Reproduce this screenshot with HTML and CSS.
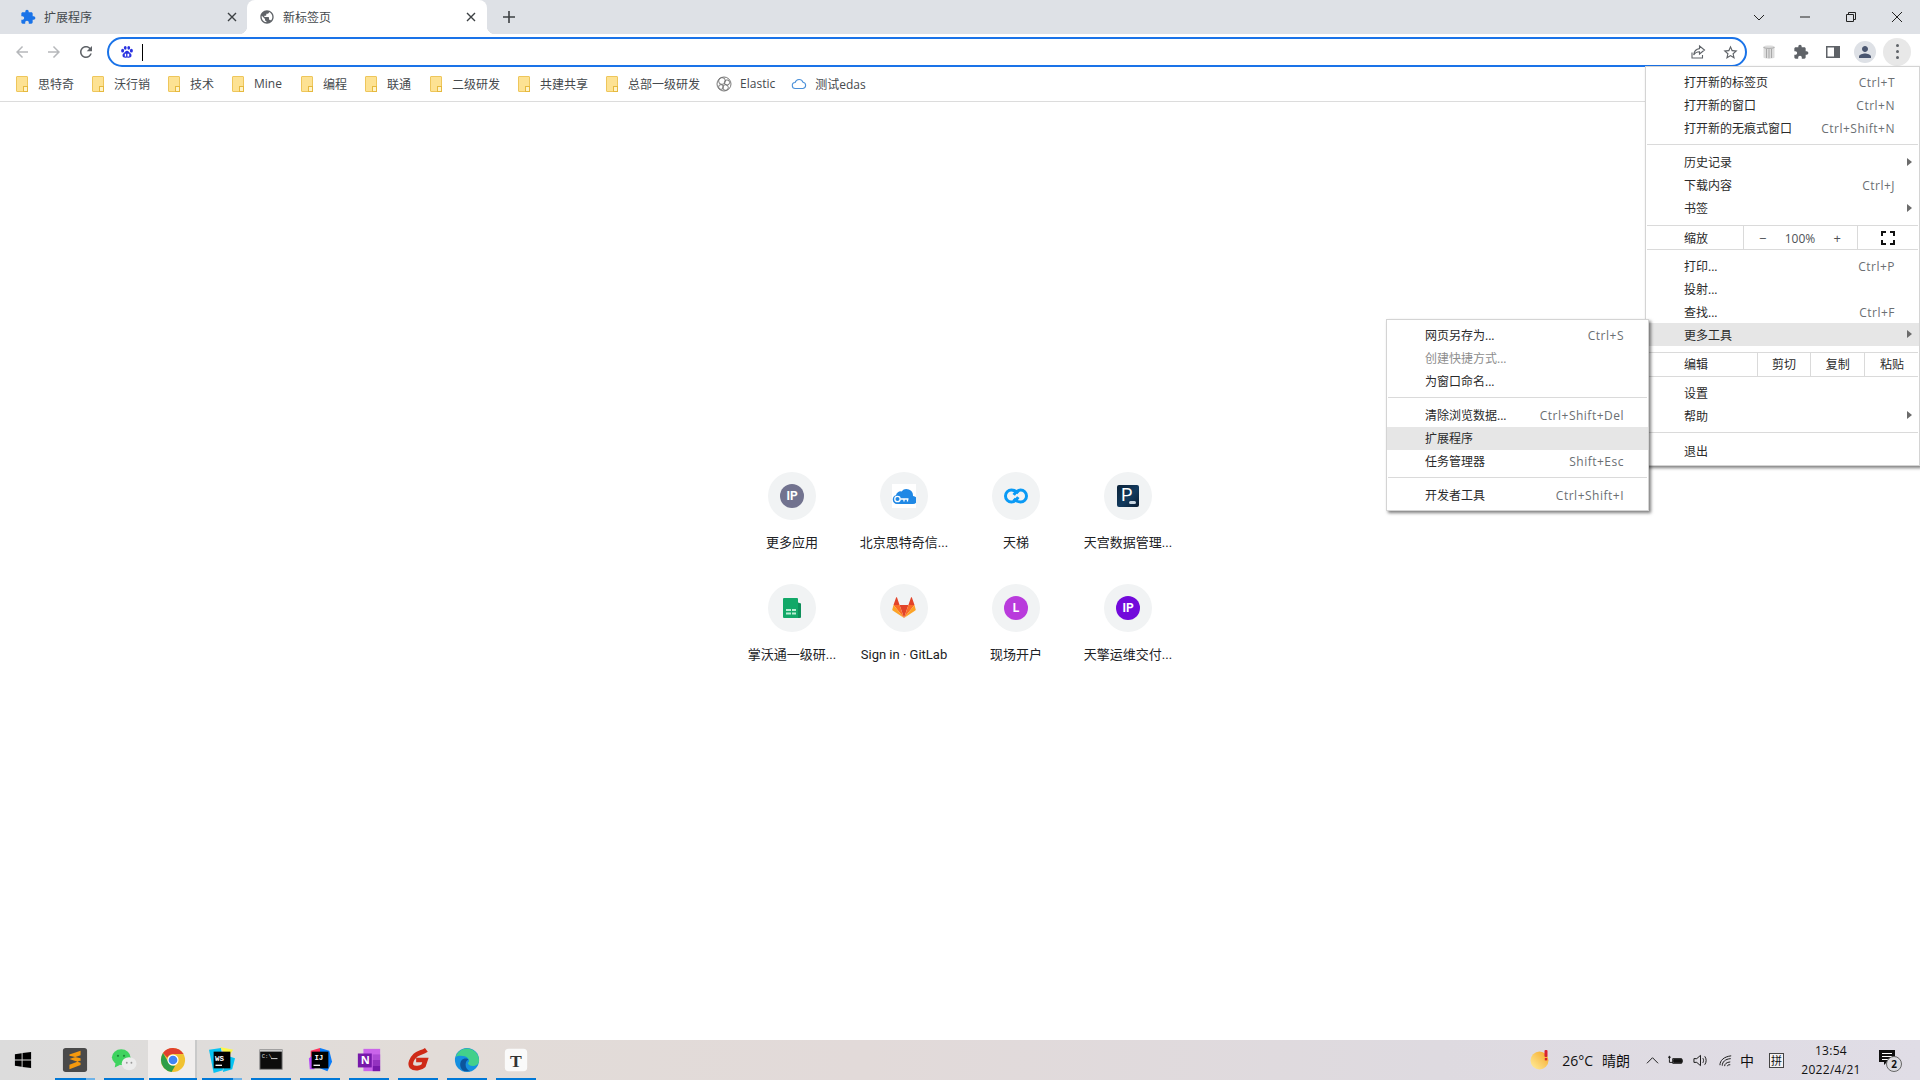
FILE: index.html
```html
<!DOCTYPE html>
<html lang="zh-CN">
<head>
    <meta charset="UTF-8">
    <title>新标签页</title>
    <link rel="stylesheet" href="styles.css">
</head>
<body>
    <div class="tabstrip">
        <div class="tab">
            <svg class="favicon" viewBox="0 0 24 24"><path fill="#1a73e8" d="M20.5 11H19V7c0-1.1-.9-2-2-2h-4V3.5C13 2.12 11.88 1 10.5 1S8 2.12 8 3.5V5H4c-1.1 0-1.99.9-1.99 2v3.8H3.5c1.49 0 2.7 1.21 2.7 2.7s-1.21 2.7-2.7 2.7H2V20c0 1.1.9 2 2 2h3.8v-1.5c0-1.49 1.21-2.7 2.7-2.7 1.49 0 2.7 1.21 2.7 2.7V22H17c1.1 0 2-.9 2-2v-4h1.5c1.38 0 2.5-1.12 2.5-2.5S21.88 11 20.5 11z"/></svg>
            <span class="tab-title">扩展程序</span>
            <svg class="tab-close" viewBox="0 0 10 10"><path d="M1 1l8 8M9 1l-8 8"/></svg>
        </div>
        <div class="tab tab-active">
            <svg class="favicon" viewBox="0 0 24 24"><path fill="#5f6368" d="M12 2C6.48 2 2 6.48 2 12s4.48 10 10 10 10-4.48 10-10S17.52 2 12 2zm-1 17.93c-3.95-.49-7-3.85-7-7.93 0-.62.08-1.21.21-1.79L9 15v1c0 1.1.9 2 2 2v1.93zm6.9-2.54c-.26-.81-1-1.39-1.9-1.39h-1v-3c0-.55-.45-1-1-1H8v-2h2c.55 0 1-.45 1-1V7h2c1.1 0 2-.9 2-2v-.41c2.93 1.19 5 4.06 5 7.41 0 2.08-.8 3.97-2.1 5.39z"/></svg>
            <span class="tab-title">新标签页</span>
            <svg class="tab-close" viewBox="0 0 10 10"><path d="M1 1l8 8M9 1l-8 8"/></svg>
        </div>
        <svg class="new-tab" viewBox="0 0 12 12"><path d="M6 0v12M0 6h12"/></svg>
        <div class="window-controls">
            <svg class="win-btn" viewBox="0 0 12 12"><path d="M1 4l5 5 5-5"/></svg>
            <svg class="win-btn" viewBox="0 0 12 12"><path d="M1 6h10"/></svg>
            <svg class="win-btn" viewBox="0 0 12 12"><path d="M1.5 3.5h7v7h-7zM3.5 3.500v-2h7v7h-2"/></svg>
            <svg class="win-btn" viewBox="0 0 12 12"><path d="M1 1l10 10M11 1L1 11"/></svg>
        </div>
    </div>

    <div class="toolbar">
        <svg class="nav-icon nav-off" viewBox="0 0 24 24"><path d="M20 11H7.83l5.59-5.59L12 4l-8 8 8 8 1.41-1.41L7.83 13H20v-2z"/></svg>
        <svg class="nav-icon nav-off" viewBox="0 0 24 24"><path d="M12 4l-1.41 1.41L16.17 11H4v2h12.17l-5.58 5.59L12 20l8-8z"/></svg>
        <svg class="nav-icon" viewBox="0 0 24 24"><path d="M17.65 6.35C16.2 4.9 14.21 4 12 4c-4.42 0-7.99 3.58-7.99 8s3.57 8 7.99 8c3.73 0 6.84-2.55 7.73-6h-2.08c-.82 2.33-3.04 4-5.65 4-3.31 0-6-2.69-6-6s2.69-6 6-6c1.66 0 3.14.69 4.22 1.78L13 11h7V4l-2.35 2.35z"/></svg>
        <div class="omnibox">
            <svg class="baidu" viewBox="0 0 16 16" fill="#2932e1">
                <ellipse cx="3" cy="6.500" rx="1.700" ry="2.100"/>
                <ellipse cx="6" cy="3.200" rx="1.600" ry="2.200"/>
                <ellipse cx="10" cy="3.200" rx="1.600" ry="2.200"/>
                <ellipse cx="13" cy="6.500" rx="1.700" ry="2.100"/>
                <path d="M8 6.500c-2 0-2.400 2-3.800 3C3 10.400 2.600 11.500 3 12.800 3.500 14.500 5.500 14.700 8 14.200c2.500.5 4.500.3 5-1.400.4-1.300 0-2.400-1.200-3.300-1.400-1-1.800-3-3.800-3z"/>
                <path fill="#fff" d="M5.500 10h1.500v3H5.500zM8.500 10h2v3h-2z"/>
            </svg>
            <span class="caret"></span>
            <svg class="omni-icon" viewBox="0 0 16 16"><path fill="none" stroke="#5f6368" stroke-width="1.100" d="M2 8.500v5.500h10.500v-3M9.500 2l5 4-5 4V7.700C7 7.700 5 8.600 3.700 11 4 8 6 5 9.500 4.600z"/></svg>
            <svg class="omni-icon omni-star" viewBox="0 0 24 24"><path fill="#5f6368" d="M22 9.240l-7.190-.62L12 2 9.190 8.630 2 9.240l5.460 4.730L5.820 21 12 17.270 18.180 21l-1.630-7.030L22 9.240zM12 15.400l-3.760 2.270 1-4.280-3.320-2.880 4.380-.38L12 6.100l1.710 4.040 4.380.38-3.320 2.880 1 4.280L12 15.400z"/></svg>
        </div>
        <div class="ext-icons">
            <svg class="ext-icon" viewBox="0 0 16 16"><path fill="#dcdcdc" d="M2.500 2.500c0-1.500 11-1.500 11 0v11c0 1.500-11 1.500-11 0z"/><path fill="none" stroke="#a9a9a9" d="M2.500 3.500c2 1.200 9 1.200 11 0M5.500 5v9M8 5.200v9M10.500 5v9"/></svg>
            <svg class="ext-icon" viewBox="0 0 24 24"><path fill="#5f6368" d="M20.500 11H19V7c0-1.100-.9-2-2-2h-4V3.500C13 2.120 11.880 1 10.500 1S8 2.120 8 3.500V5H4c-1.100 0-1.990.9-1.990 2v3.800H3.500c1.490 0 2.700 1.210 2.700 2.700s-1.210 2.700-2.700 2.700H2V20c0 1.100.9 2 2 2h3.800v-1.500c0-1.490 1.210-2.700 2.700-2.700 1.490 0 2.700 1.210 2.700 2.700V22H17c1.100 0 2-.9 2-2v-4h1.500c1.380 0 2.500-1.120 2.500-2.500S21.880 11 20.500 11z"/></svg>
            <svg class="ext-icon" viewBox="0 0 16 16"><path fill="#5f6368" fill-rule="evenodd" d="M1 2h14v12H1zM2.500 3.500v9H9v-9z"/></svg>
            <span class="avatar"><svg viewBox="0 0 24 24"><path fill="#4a5670" d="M12 12c2.210 0 4-1.790 4-4s-1.790-4-4-4-4 1.790-4 4 1.790 4 4 4zm0 2c-2.670 0-8 1.340-8 4v2h16v-2c0-2.660-5.330-4-8-4z"/></svg></span>
            <span class="kebab"><i></i><i></i><i></i></span>
        </div>
    </div>

    <div class="bookmarks">
        <a class="bookmark"><span class="folder"></span>思特奇</a>
        <a class="bookmark"><span class="folder"></span>沃行销</a>
        <a class="bookmark"><span class="folder"></span>技术</a>
        <a class="bookmark bookmark-latin"><span class="folder"></span>Mine</a>
        <a class="bookmark"><span class="folder"></span>编程</a>
        <a class="bookmark bookmark-gap"><span class="folder"></span>联通</a>
        <a class="bookmark"><span class="folder"></span>二级研发</a>
        <a class="bookmark"><span class="folder"></span>共建共享</a>
        <a class="bookmark"><span class="folder"></span>总部一级研发</a>
        <a class="bookmark bookmark-site">
            <svg class="site-icon" viewBox="0 0 16 16" fill="none" stroke="#6b6b6b" stroke-width=".9"><circle cx="8" cy="8" r="7"/><circle cx="6" cy="5" r="3.400"/><circle cx="11" cy="6.500" r="2.600"/><circle cx="5" cy="11" r="2.400"/><circle cx="9.500" cy="11.500" r="2.800"/></svg>Elastic
        </a>
        <a class="bookmark bookmark-site">
            <svg class="site-icon" viewBox="0 0 16 16" fill="none" stroke="#4a90d9" stroke-width="1.100"><path d="M4.500 12.500a3 3 0 0 1-.4-6A4.200 4.200 0 0 1 12 6.200a3.200 3.200 0 0 1 0 6.300z"/></svg>测试edas
        </a>
    </div>

    <main class="ntp">
        <div class="tiles">
            <div class="tile">
                <span class="tile-icon"><span class="letter letter-slate">IP</span></span>
                <span class="tile-title">更多应用</span>
            </div>
            <div class="tile">
                <span class="tile-icon">
                    <svg class="tile-svg" viewBox="0 0 24 24"><rect width="24" height="24" fill="#fff"/><path fill="#1f88e5" d="M5 20a4.500 4.500 0 0 1-1-8.800A4.500 4.500 0 0 1 9.500 7.500 6.500 6.500 0 0 1 21 12a4 4 0 0 1-.5 8z"/><circle cx="5.500" cy="15" r="2.700" fill="none" stroke="#fff" stroke-width="1.300"/><path stroke="#fff" stroke-width="1.300" d="M8.500 15h8M12 15v2.500M15.500 15v2.500"/></svg>
                </span>
                <span class="tile-title">北京思特奇信...</span>
            </div>
            <div class="tile">
                <span class="tile-icon">
                    <svg class="tile-svg" viewBox="1.500 1.500 21 21" fill="none" stroke="#0a9af5" stroke-width="2.600"><path d="M14 9.500C12.500 8 11 6.800 8 6.800a5.200 5.200 0 0 0 0 10.400c3 0 5-2.700 6-4.200"/><path d="M10 14.500c1.500 1.500 3 2.700 6 2.700a5.200 5.200 0 0 0 0-10.400c-3 0-5 2.700-6 4.200"/></svg>
                </span>
                <span class="tile-title">天梯</span>
            </div>
            <div class="tile">
                <span class="tile-icon"><span class="square-p">P<i class="square-dots"></i></span></span>
                <span class="tile-title">天宫数据管理...</span>
            </div>
            <div class="tile">
                <span class="tile-icon">
                    <svg class="tile-svg" viewBox="0 0 24 24"><path fill="#0e8f5a" d="M18 6.500l3 1V21a1 1 0 0 1-1 1h-3z"/><path fill="#12a868" d="M3 3a1 1 0 0 1 1-1h13a1 1 0 0 1 1 1v19H4a1 1 0 0 1-1-1z"/><path fill="#b9eed3" d="M6 13h5v2H6zM12 13h4v2h-4zM6 16.500h5v2H6zM12 16.500h4v2h-4z"/></svg>
                </span>
                <span class="tile-title">掌沃通一级研...</span>
            </div>
            <div class="tile">
                <span class="tile-icon">
                    <svg class="tile-svg" viewBox="0 0 24 24"><path fill="#e24329" d="M12 22L7.600 9h8.800z"/><path fill="#fc6d26" d="M12 22L7.600 9H1.500zM12 22l4.400-13h6.100z"/><path fill="#fca326" d="M1.500 9L.3 13.400c-.1.400 0 .8.400 1.100L12 22zM22.500 9l1.200 4.400c.1.400 0 .8-.4 1.100L12 22z"/><path fill="#e24329" d="M1.500 9h6.100L5 1.500c-.2-.4-.7-.4-.9 0zM22.500 9h-6.100L19 1.500c.2-.4.7-.4.900 0z"/></svg>
                </span>
                <span class="tile-title">Sign in · GitLab</span>
            </div>
            <div class="tile">
                <span class="tile-icon"><span class="letter letter-pink">L</span></span>
                <span class="tile-title">现场开户</span>
            </div>
            <div class="tile">
                <span class="tile-icon"><span class="letter letter-violet">IP</span></span>
                <span class="tile-title">天擎运维交付...</span>
            </div>
        </div>
    </main>

    <div class="taskbar">
        <div class="task-item task-start">
            <svg class="task-icon win-logo" viewBox="0 0 20 20"><path fill="#000" d="M1 3.500l7.500-1v7H1zM9.500 2.300L19 1v8.500H9.500zM1 10.500h7.500v7l-7.500-1zM9.500 10.500H19V19l-9.500-1.300z"/></svg>
        </div>
        <div class="task-item on multi">
            <svg class="task-icon" viewBox="0 0 28 28"><rect x="1" y="1" width="26" height="26" rx="3" fill="#4a4a4a"/><path fill="#f59a0e" d="M20 4v5L8 13V8zM8 13l12 4v-5L8 9.500zM20 14.500v5L8 24v-5z"/></svg>
        </div>
        <div class="task-item on">
            <svg class="task-icon" viewBox="0 0 28 28"><ellipse cx="11" cy="11" rx="10" ry="8.500" fill="#3fd35f"/><path fill="#3fd35f" d="M5 17l-1 5 6-3z"/><circle cx="7.500" cy="9.500" r="1.200" fill="#1f8a3a"/><circle cx="14" cy="9.500" r="1.200" fill="#1f8a3a"/><ellipse cx="19.500" cy="18" rx="8" ry="7" fill="#ececec"/><circle cx="17" cy="17" r="1" fill="#999"/><circle cx="22" cy="17" r="1" fill="#999"/></svg>
        </div>
        <div class="task-item on active">
            <svg class="task-icon" viewBox="0 0 28 28"><circle cx="14" cy="14" r="13" fill="#f1c232"/><path fill="#e0402f" d="M14 1a13 13 0 0 1 11.300 6.500H14A6.500 6.500 0 0 0 8 11.500L3.200 6.500A13 13 0 0 1 14 1z"/><path fill="#2f9e48" d="M1 14a13 13 0 0 1 2.200-7.500L9 16.500a6.500 6.500 0 0 0 7.500 3.500L12.500 27A13 13 0 0 1 1 14z"/><circle cx="14" cy="14" r="6" fill="#fff"/><circle cx="14" cy="14" r="4.700" fill="#4285f4"/></svg>
        </div>
        <div class="task-item on multi">
            <svg class="task-icon" viewBox="0 0 28 28"><path fill="#07c3f2" d="M0 3l13-2 2 24-10 3z"/><path fill="#fcf84a" d="M12 0l14 3-6 9z"/><path fill="#07c3f2" d="M18 9l10 3-3 12-10 3z"/><rect x="5" y="5" width="18" height="18" fill="#000"/><text class="ide-text" x="6.500" y="15">WS</text><rect x="7" y="19" width="7" height="1.400" fill="#fff"/></svg>
        </div>
        <div class="task-item on">
            <svg class="task-icon" viewBox="0 0 28 28"><rect x="2" y="3" width="24" height="21" fill="#0c0c0c" stroke="#8b8b8b"/><rect x="2" y="3" width="24" height="2" fill="#c9c9c9"/><text class="cmd-text" x="4" y="12">C:\</text><rect x="14" y="12" width="7" height="1" fill="#ddd"/></svg>
        </div>
        <div class="task-item on">
            <svg class="task-icon" viewBox="0 0 28 28"><path fill="#fe315d" d="M4 4l10-3 2 14-12 8z"/><path fill="#087cfa" d="M14 1l10 3 3 12-5 10-8-3z"/><path fill="#b74af7" d="M2 12l6-4v16l-5 0z"/><rect x="5" y="5" width="18" height="18" fill="#000"/><text class="ide-text" x="8" y="14.500">IJ</text><rect x="7" y="19" width="7" height="1.400" fill="#fff"/></svg>
        </div>
        <div class="task-item on">
            <svg class="task-icon" viewBox="0 0 28 28"><rect x="8" y="2" width="18" height="24" fill="#ca64ea"/><rect x="18" y="8" width="8" height="6" fill="#ae4bd5"/><rect x="18" y="14" width="8" height="6" fill="#9332bf"/><rect x="18" y="20" width="8" height="6" fill="#7719aa"/><rect x="2" y="7" width="15" height="15" fill="#7719aa"/><text class="one-text" x="5" y="18.500">N</text></svg>
        </div>
        <div class="task-item on">
            <svg class="task-icon" viewBox="0 0 28 28"><path fill="none" stroke="#cf2a17" stroke-width="5" d="M23 3c-4 3-9 3-12 6-4 4-6 9-4 12 3 3 10 2 13-1l2-6H12"/></svg>
        </div>
        <div class="task-item on">
            <svg class="task-icon" viewBox="0 0 28 28"><circle cx="14" cy="14" r="13" fill="#1590e0"/><path fill="#43d08a" d="M1.500 11a13 13 0 0 1 25.500 3c.2 4-2.500 6.500-6.500 6.500-3.500 0-5.500-1.500-5.500-3.500 1.500-1 2-3 0-5-3-3-10.500-3.500-13.500-1z"/><path fill="#0c559c" d="M11 26c-4.500-2-5.500-8-3-11.500 2-2.500 6-2.500 7.500-1-1.500.7-3 2.500-3 5.500 0 3.500 2 6 5 7z"/></svg>
        </div>
        <div class="task-item on">
            <svg class="task-icon" viewBox="0 0 28 28"><rect x="2" y="2" width="24" height="24" rx="4" fill="#fafafa"/><text class="t-text" x="14" y="21">T</text></svg>
        </div>

        <div class="tray">
            <svg class="weather" viewBox="0 0 20 20"><defs><linearGradient id="sun" x1="0" y1="1" x2="1" y2="0"><stop offset="0" stop-color="#fff0a0"/><stop offset="1" stop-color="#f5a623"/></linearGradient></defs><circle cx="9.500" cy="10.500" r="9" fill="url(#sun)"/><rect x="14.500" y="0" width="3" height="7" rx="1" fill="#d9232e"/><rect x="14.800" y="8" width="2.400" height="2.400" fill="#d9232e"/></svg>
            <span class="temp">26°C</span>
            <span class="sky">晴朗</span>
            <svg class="tray-icon tray-up" viewBox="0 0 14 14"><path d="M1 10l6-6 6 6"/></svg>
            <svg class="tray-icon" viewBox="0 0 16 16"><path d="M5 6h9.500v5H5zM14.500 7.500H16v2h-1.500M0 4.500h3M1.500 3v4M1.500 7v3H5"/><path class="fill" d="M6 7h8v3H6z"/></svg>
            <svg class="tray-icon tray-vol" viewBox="0 0 16 16"><path d="M1 6h3l4-3.500v11L4 10H1zM10.500 5.500c1 1.500 1 3.500 0 5M12.500 3.500c2 2.500 2 6.500 0 9"/></svg>
            <svg class="tray-icon tray-wifi" viewBox="0 0 16 16"><path d="M1 13c0-5 4-9 12-10M3.500 13.500c0-4 3-7 9-7.500M6 14c0-2.500 2-4 6-4.500M9 14c0-1 1-1.500 3-1.500"/></svg>
            <span class="ime">中</span>
            <span class="ime-box">拼</span>
            <div class="clock"><span>13:54</span><span>2022/4/21</span></div>
            <div class="notify">
                <svg class="notify-icon" viewBox="0 0 16 16"><path d="M0 0h16v12H8l-3 3v-3H0z"/><path fill="#fff" d="M3 3h10v1H3zM3 6h10v1H3zM3 9h7v1H3z"/></svg>
                <span class="notify-badge">2</span>
            </div>
        </div>
    </div>

    <div class="menu menu-main">
        <div class="menu-row"><span>打开新的标签页</span><kbd>Ctrl+T</kbd></div>
        <div class="menu-row"><span>打开新的窗口</span><kbd>Ctrl+N</kbd></div>
        <div class="menu-row"><span>打开新的无痕式窗口</span><kbd>Ctrl+Shift+N</kbd></div>
        <hr>
        <div class="menu-row has-sub"><span>历史记录</span></div>
        <div class="menu-row"><span>下载内容</span><kbd>Ctrl+J</kbd></div>
        <div class="menu-row has-sub"><span>书签</span></div>
        <hr class="tight">
        <div class="menu-row menu-split">
            <span class="split-label zoom-label">缩放</span>
            <span class="zoom-ctl"><b>−</b><em>100%</em><b>+</b></span>
            <span class="zoom-full"><svg viewBox="0 0 14 14"><path d="M1 5V1h4M9 1h4v4M13 9v4H9M5 13H1V9"/></svg></span>
        </div>
        <hr class="flush">
        <div class="menu-row"><span>打印...</span><kbd>Ctrl+P</kbd></div>
        <div class="menu-row"><span>投射...</span></div>
        <div class="menu-row"><span>查找...</span><kbd>Ctrl+F</kbd></div>
        <div class="menu-row has-sub hover"><span>更多工具</span></div>
        <hr class="tight wide">
        <div class="menu-row menu-split">
            <span class="split-label edit-label">编辑</span>
            <span class="edit-btn">剪切</span><span class="edit-btn">复制</span><span class="edit-btn">粘贴</span>
        </div>
        <hr class="flush">
        <div class="menu-row"><span>设置</span></div>
        <div class="menu-row has-sub"><span>帮助</span></div>
        <hr class="wide">
        <div class="menu-row"><span>退出</span></div>
    </div>

    <div class="menu menu-sub">
        <div class="menu-row"><span>网页另存为...</span><kbd>Ctrl+S</kbd></div>
        <div class="menu-row disabled"><span>创建快捷方式...</span></div>
        <div class="menu-row"><span>为窗口命名...</span></div>
        <hr>
        <div class="menu-row"><span>清除浏览数据...</span><kbd>Ctrl+Shift+Del</kbd></div>
        <div class="menu-row hover"><span>扩展程序</span></div>
        <div class="menu-row"><span>任务管理器</span><kbd>Shift+Esc</kbd></div>
        <hr>
        <div class="menu-row"><span>开发者工具</span><kbd>Ctrl+Shift+I</kbd></div>
    </div>
</body>
</html>
```

FILE: styles.css
```css
* {
    box-sizing: border-box;
}

html, body {
    height: 100%;
}

body {
    margin: 0;
    display: flex;
    flex-direction: column;
    overflow: hidden;
    background: #fff;
    color: #333;
    font-family: "Open Sans", "Noto Sans CJK SC", sans-serif;
    font-size: 12px;
}

/* tab strip */
.tabstrip {
    height: 34px;
    flex: none;
    display: flex;
    align-items: center;
    padding-left: 8px;
    background: #dee1e6;
}

.tab {
    position: relative;
    width: 239px;
    height: 34px;
    display: flex;
    align-items: center;
    padding: 0 9px 0 12px;
    color: #45494d;
}

.tab-active {
    width: 240px;
    padding-right: 10px;
    background: #fff;
    border-radius: 8px 8px 0 0;
}

.tab-active::before,
.tab-active::after {
    content: "";
    position: absolute;
    bottom: 0;
    width: 8px;
    height: 8px;
}

.tab-active::before {
    left: -8px;
    background: radial-gradient(circle at 0 0, #dee1e6 8px, #fff 8.5px);
}

.tab-active::after {
    right: -8px;
    background: radial-gradient(circle at 100% 0, #dee1e6 8px, #fff 8.5px);
}

.favicon {
    width: 16px;
    height: 16px;
    flex: none;
}

.tab-title {
    margin-left: 8px;
    flex: 1;
}

.tab-close {
    width: 10px;
    height: 10px;
    flex: none;
    margin-right: 1px;
    fill: none;
    stroke: #3c4043;
    stroke-width: 1.4;
}

.new-tab {
    width: 12px;
    height: 12px;
    margin-left: 16px;
    fill: none;
    stroke: #3c4043;
    stroke-width: 1.6;
}

.window-controls {
    margin-left: auto;
    display: flex;
    align-items: center;
    padding-right: 17px;
    gap: 34px;
}

.win-btn {
    width: 12px;
    height: 12px;
    fill: none;
    stroke: #222;
    stroke-width: 1;
}

/* toolbar */
.toolbar {
    height: 32px;
    flex: none;
    display: flex;
    align-items: flex-start;
    padding-left: 13px;
    background: #fff;
}

.nav-icon {
    width: 18px;
    height: 18px;
    margin: 9px 14px 0 0;
    fill: #5f6368;
}

.nav-off {
    fill: #b6b8bb;
}

.omnibox {
    position: relative;
    z-index: 1;
    width: 1640px;
    height: 30px;
    margin: 3px 0 0 -2px;
    flex: none;
    display: flex;
    align-items: center;
    padding: 0 6px 0 11px;
    border: 2px solid #1a73e8;
    border-radius: 15px;
    background: #fff;
}

.baidu {
    width: 14px;
    height: 14px;
    flex: none;
}

.caret {
    width: 1px;
    height: 17px;
    margin-left: 8px;
    background: #000;
}

.omni-icon {
    width: 16px;
    height: 16px;
    margin-left: auto;
}

.omni-star {
    margin-left: 16px;
    width: 17px;
    height: 17px;
}

.ext-icons {
    display: flex;
    align-items: center;
    height: 35px;
    padding-left: 14px;
}

.ext-icon {
    width: 16px;
    height: 16px;
    margin-right: 16px;
}

.avatar {
    width: 22px;
    height: 22px;
    margin: 0 7px 0 -3px;
    display: flex;
    align-items: center;
    justify-content: center;
    border-radius: 50%;
    background: #dee1e6;
}

.avatar svg {
    width: 18px;
    height: 18px;
}

.kebab {
    width: 28px;
    height: 28px;
    display: flex;
    flex-direction: column;
    align-items: center;
    justify-content: center;
    gap: 3px;
    border-radius: 50%;
    background: #e8e8e8;
}

.kebab i {
    width: 3px;
    height: 3px;
    border-radius: 50%;
    background: #5f6368;
}

/* bookmarks */
.bookmarks {
    height: 36px;
    flex: none;
    display: flex;
    align-items: center;
    padding-left: 16px;
    border-bottom: 1px solid #dcdcdc;
    background: #fff;
    color: #45494d;
}

.bookmark {
    display: flex;
    align-items: center;
    gap: 10px;
    margin-right: 18px;
}

.bookmark-latin {
    margin-right: 19px;
}

.bookmark-gap {
    margin-right: 19px;
}

.folder {
    position: relative;
    width: 12px;
    height: 16px;
    border: 1px solid #eec65b;
    border-radius: 1px;
    background: #fde293;
}

.folder::after {
    content: "";
    position: absolute;
    right: -1px;
    bottom: -1px;
    width: 3px;
    height: 4px;
    border: 1px solid #e6b93f;
    background: #fff3c6;
}

.bookmark-site {
    gap: 8px;
    margin-left: -2px;
    margin-right: 18px;
}

.site-icon {
    width: 16px;
    height: 16px;
}

/* new tab page */
.ntp {
    flex: 1;
    display: flex;
    justify-content: center;
    padding-top: 354px;
}

.tiles {
    width: 448px;
    height: 224px;
    display: grid;
    grid-template-columns: repeat(4, 112px);
    grid-auto-rows: 112px;
}

.tile {
    display: flex;
    flex-direction: column;
    align-items: center;
    padding-top: 16px;
    font-family: Roboto, "Noto Sans CJK SC", sans-serif;
    font-size: 13px;
    color: #202124;
}

.tile-icon {
    width: 48px;
    height: 48px;
    display: flex;
    align-items: center;
    justify-content: center;
    border-radius: 50%;
    background: #f1f3f4;
}

.tile-svg {
    width: 24px;
    height: 24px;
}

.tile-title {
    margin-top: 13px;
    line-height: 20px;
    white-space: nowrap;
}

.letter {
    width: 24px;
    height: 24px;
    display: flex;
    align-items: center;
    justify-content: center;
    border-radius: 50%;
    color: #fff;
    font-size: 12px;
    font-weight: 700;
}

.letter-slate {
    background: #72738f;
}

.letter-pink {
    background: #b93bdc;
}

.letter-violet {
    background: #7209db;
}

.square-p {
    position: relative;
    width: 22px;
    height: 22px;
    border-radius: 2px;
    background: linear-gradient(135deg, #0c2238, #123a5e 55%, #0a1c30);
    color: #fff;
    font-size: 18px;
    line-height: 19px;
    padding-left: 4px;
}

.square-dots {
    position: absolute;
    right: 3px;
    bottom: 3px;
    width: 7px;
    height: 3px;
    border-radius: 2px;
    background: #c9d6e2;
}

/* taskbar */
.taskbar {
    height: 40px;
    flex: none;
    display: flex;
    align-items: stretch;
    background: linear-gradient(90deg, #dcdcdc 0, #e2dcd8 22%, #e2dad9 45%, #dedae0 75%, #e0dde6 100%);
    color: #111;
}

.task-item {
    position: relative;
    width: 49px;
    display: flex;
    align-items: center;
    justify-content: center;
}

.task-item.on::after {
    content: "";
    position: absolute;
    left: 5px;
    right: 4px;
    bottom: 0;
    height: 2px;
    background: #0078d7;
}

.task-item.multi::after {
    background: linear-gradient(90deg, #0078d7 78%, #6fb3e8 78%);
}

.task-item.active {
    background: linear-gradient(90deg, #f1eeed 47px, #c9c9c9 47px);
}

.task-item.active::after {
    left: 1px;
    right: 0;
}

.task-start {
    width: 50px;
    padding-right: 4px;
}

.task-icon {
    width: 26px;
    height: 26px;
}

.win-logo {
    width: 18px;
    height: 18px;
}

.ide-text {
    fill: #fff;
    font: 700 8px "Liberation Mono", monospace;
}

.cmd-text {
    fill: #ddd;
    font: 6px "Liberation Mono", monospace;
}

.one-text {
    fill: #fff;
    font: 700 12px "Open Sans", sans-serif;
}

.t-text {
    fill: #333;
    font: 700 19px "Liberation Serif", serif;
    text-anchor: middle;
}

.tray {
    margin-left: auto;
    display: flex;
    align-items: center;
    padding-right: 17px;
}

.weather {
    width: 20px;
    height: 20px;
}

.temp {
    margin-left: 12px;
    font-size: 14px;
}

.sky {
    margin-left: 9px;
    font-size: 14px;
}

.tray-icon {
    width: 15px;
    height: 15px;
    margin-left: 9px;
    fill: none;
    stroke: #111;
    stroke-width: 1;
}

.tray-icon .fill {
    fill: #111;
}

.tray-up {
    margin-left: 16px;
    width: 13px;
    height: 13px;
}

.tray-vol {
    margin-left: 10px;
}

.tray-wifi {
    margin-left: 11px;
}

.ime {
    margin-left: 6px;
    font-size: 14px;
}

.ime-box {
    width: 15px;
    height: 15px;
    margin-left: 15px;
    display: flex;
    align-items: center;
    justify-content: center;
    border: 1px solid #444;
    font-size: 11px;
    background: #f4f2f4;
}

.clock {
    width: 90px;
    margin-left: 2px;
    display: flex;
    flex-direction: column;
    align-items: center;
    gap: 3px;
    line-height: 16px;
    font-size: 12px;
    letter-spacing: .3px;
}

.notify {
    position: relative;
    width: 20px;
    height: 20px;
    margin-left: 3px;
    margin-right: 4px;
}

.notify-icon {
    width: 16px;
    height: 16px;
    fill: #111;
}

.notify-badge {
    position: absolute;
    left: 7px;
    top: 6px;
    width: 16px;
    height: 16px;
    display: flex;
    align-items: center;
    justify-content: center;
    border: 1px solid #666;
    border-radius: 50%;
    background: #dcdbe0;
    font-size: 10px;
    font-weight: 700;
}

/* chrome menus, they open over the page */
.menu {
    position: absolute;
    z-index: 2;
    padding: 4px 0;
    border: 1px solid #d4d4d4;
    background: #fff;
    box-shadow: 2px 2px 3px rgba(0, 0, 0, .5);
    color: #2a2a2a;
}

.menu-main {
    left: 1645px;
    top: 66px;
    width: 275px;
    height: 400px;
}

.menu-sub {
    z-index: 3;
    left: 1386px;
    top: 319px;
    width: 263px;
    height: 192px;
}

.menu-row {
    position: relative;
    height: 23px;
    display: flex;
    align-items: center;
    justify-content: space-between;
    line-height: 23px;
    padding: 0 24px 0 38px;
}

.menu-main hr.flush ~ .menu-row:not(.menu-split) {
    padding-top: 2px;
}

.menu-row kbd {
    color: #6b6f73;
    font: inherit;
    letter-spacing: .5px;
}

.menu-row.disabled {
    color: #8d8d8d;
}

.menu-row.hover {
    background: #e6e6e6;
}

.has-sub::after {
    content: "";
    position: absolute;
    right: 7px;
    top: 7px;
    border-left: 5px solid #6b6b6b;
    border-top: 4px solid transparent;
    border-bottom: 4px solid transparent;
}

.menu hr {
    height: 1px;
    margin: 4px 1px 6px;
    border: 0;
    background: #dadada;
}

.menu hr.wide {
    margin-top: 5px;
}

.menu hr.tight {
    margin: 5px 1px 0;
}

.menu hr.tight.wide {
    margin-top: 6px;
}

.menu hr.flush {
    margin: 0 1px 4px;
}

.menu .menu-split {
    padding: 0;
    justify-content: flex-start;
}

.split-label {
    height: 23px;
    padding-left: 38px;
    border-right: 1px solid #dadada;
}

.zoom-label {
    width: 98px;
    line-height: 25px;
}

.edit-label {
    width: 112px;
}

.zoom-ctl {
    width: 114px;
    height: 23px;
    display: flex;
    align-items: center;
    justify-content: space-between;
    padding: 2px 16px 0 15px;
    border-right: 1px solid #dadada;
    color: #4e5256;
}

.zoom-ctl b {
    font-weight: 400;
    font-size: 13px;
}

.zoom-ctl em {
    font-style: normal;
}

.zoom-full {
    flex: 1;
    display: flex;
    align-items: center;
    justify-content: center;
    padding-right: 2px;
}

.zoom-full svg {
    width: 14px;
    height: 14px;
    fill: none;
    stroke: #111;
    stroke-width: 2;
}

.edit-btn {
    width: 54px;
    height: 23px;
    text-align: center;
    border-right: 1px solid #dadada;
}

.edit-btn:last-child {
    border-right: 0;
}
```
